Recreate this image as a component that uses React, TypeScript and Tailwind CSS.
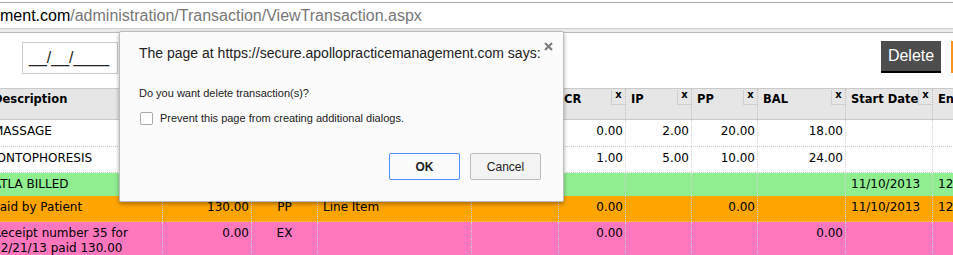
import React from 'react'

type Align = 'left' | 'right' | 'center'

const cols: { label: string; w: string; align: Align }[] = [
    { label: 'Description', w: 'w-[175px]', align: 'left' },
    { label: 'Amount', w: 'w-[89px]', align: 'right' },
    { label: 'Type', w: 'w-[66px]', align: 'center' },
    { label: 'Memo', w: 'w-[154px]', align: 'left' },
    { label: 'DR', w: 'w-[87px]', align: 'right' },
    { label: 'CR', w: 'w-[67px]', align: 'right' },
    { label: 'IP', w: 'w-[66px]', align: 'right' },
    { label: 'PP', w: 'w-[66px]', align: 'right' },
    { label: 'BAL', w: 'w-[88px]', align: 'right' },
    { label: 'Start Date', w: 'w-[87px]', align: 'left' },
    { label: 'End Date', w: 'w-[87px]', align: 'left' },
]

const rows: { bg: string; h: string; pt: string; line: string; cells: string[] }[] = [
    { bg: 'bg-white', h: 'h-[27px]', pt: 'pt-[4px]', line: 'border-b border-dotted border-[#c8c8c8]', cells: ['MASSAGE', '20.00', 'CH', 'Line Item', '20.00', '0.00', '2.00', '20.00', '18.00', '', ''] },
    { bg: 'bg-white', h: 'h-[26px]', pt: 'pt-[4px]', line: 'border-b border-dotted border-[#c8c8c8]', cells: ['IONTOPHORESIS', '40.00', 'CH', 'Line Item', '40.00', '1.00', '5.00', '10.00', '24.00', '', ''] },
    { bg: 'bg-[#90ee90]', h: 'h-[23px]', pt: 'pt-[4px]', line: '', cells: ['ATLA BILLED', '', '', '', '', '', '', '', '', '11/10/2013', '12/10/2013'] },
    { bg: 'bg-[#ffa500]', h: 'h-[26px]', pt: 'pt-[4px]', line: 'border-b border-dotted border-[#e8c27a]', cells: ['Paid by Patient', '130.00', 'PP', 'Line Item', '', '0.00', '', '0.00', '', '11/10/2013', '12/10/2013'] },
    { bg: 'bg-[#ff78be]', h: 'h-[40px]', pt: 'pt-[4px]', line: '', cells: ['Receipt number 35 for\n12/21/13 paid 130.00', '0.00', 'EX', '', '', '0.00', '', '', '0.00', '', ''] },
]

const alignCls: Record<Align, string> = {
    left: 'text-left pl-[5px]',
    right: 'text-right pr-[2px]',
    center: 'text-center',
}

function HeaderRow() {
    return (
        <div className="flex h-[32px] bg-[#e6e6e6] border-y border-[#c9c9c9]">
            {cols.map(c => (
                <div key={c.label} className={`${c.w} shrink-0 relative border-r border-dotted border-[#bdbdbd] pl-[5px] pt-[2px] font-bold text-[11.5px] leading-[16px] whitespace-nowrap`}>
                    {c.label}
                    <div className="absolute right-0 top-[1px] w-[14px] h-[15px] border-l border-b border-[#cfcfcf] text-[10px] leading-[10px] text-center font-bold">x</div>
                </div>
            ))}
        </div>
    )
}

function DataRow({ row }: { row: typeof rows[number] }) {
    return (
        <div className={`flex ${row.bg} ${row.h} ${row.line}`}>
            {row.cells.map((v, i) => (
                <div key={i} className={`${cols[i].w} shrink-0 border-r border-dotted border-[#d6d6d6] ${row.pt} ${alignCls[cols[i].align]} leading-[15px] whitespace-pre-line`}>
                    {v}
                </div>
            ))}
        </div>
    )
}

function ConfirmDialog() {
    return (
        <div className="absolute left-[119px] top-[31px] w-[445px] h-[171px] bg-[#fbfbfb] border border-[#bdbdbd] rounded-[2px] shadow-[0_2px_4px_rgba(0,0,0,0.35)] font-['Liberation_Sans',Arial,sans-serif] text-[#222]">
            <svg className="absolute right-[10px] top-[10px]" width="9" height="9" viewBox="0 0 9 9">
                <path d="M1 1L8 8M8 1L1 8" stroke="#7a7a7a" strokeWidth="2" />
            </svg>
            <div className="pt-[12px] pl-[19px] pr-[22px]">
                <div className="text-[14px] leading-[18px] whitespace-nowrap">The page at https://secure.apollopracticemanagement.com says:</div>
                <div className="mt-[24px] text-[11px] leading-[14px]">Do you want delete transaction(s)?</div>
                <div className="mt-[11px] flex items-center gap-[7px]">
                    <div className="ml-[1px] w-[13px] h-[13px] bg-white border border-[#aaa] rounded-[2px]" />
                    <span className="text-[11px] leading-[14px]">Prevent this page from creating additional dialogs.</span>
                </div>
                <div className="mt-[28px] flex justify-end gap-[10px]">
                    <button className="w-[71px] h-[27px] bg-[#fbfbfb] border border-[#4d90fe] rounded-[2px] text-[12px] font-bold text-[#222]">OK</button>
                    <button className="w-[71px] h-[27px] bg-[#f3f3f3] border border-[#bcbcbc] rounded-[2px] text-[12px] text-[#222]">Cancel</button>
                </div>
            </div>
        </div>
    )
}

export default function App() {
    return (
        <div className="relative w-[953px] h-[255px] overflow-hidden bg-white">
            {/* address bar */}
            <div className="mt-[2px] h-[27px] border-t border-b border-t-[#a9a9a9] border-b-[#cfcfcf] flex items-center font-['Liberation_Sans',Arial,sans-serif] text-[16px] whitespace-nowrap">
                <span className="text-black">ment.com</span>
                <span className="text-[#777]">/administration/Transaction/ViewTransaction.aspx</span>
            </div>
            <div className="h-[4px] bg-[#ececec] border-b border-[#bcbcbc]" />

            {/* toolbar */}
            <div className="h-[55px] flex items-start pt-[8px] overflow-hidden">
                <div className="ml-[22px] mt-[1px] w-[96px] h-[32px] shrink-0 border border-[#cccccc] flex items-center pl-[6px] font-['Liberation_Sans',Arial,sans-serif] text-[16px] text-[#222]">
                    __/__/____
                </div>
                <div className="ml-[763px] w-[60px] h-[32px] shrink-0 bg-[#4d4d4d] border-b-2 border-black flex items-center justify-center font-['Liberation_Sans',Arial,sans-serif] text-[16px] text-white">
                    Delete
                </div>
                <div className="ml-[10px] w-[40px] h-[32px] shrink-0 bg-[#f7931e]" />
            </div>

            {/* grid */}
            <div className="ml-[-12px] w-max font-['DejaVu_Sans',Verdana,sans-serif] text-[12px] text-black">
                <HeaderRow />
                {rows.map((r, i) => <DataRow key={i} row={r} />)}
            </div>

            <ConfirmDialog />
        </div>
    )
}
